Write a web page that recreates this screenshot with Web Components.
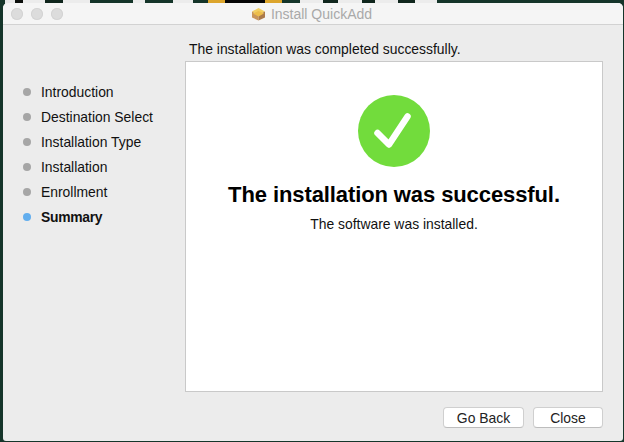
<!DOCTYPE html>
<html>
<head>
<meta charset="utf-8">
<title>Install QuickAdd</title>
<style>
    html, body {
        margin: 0;
        height: 442px;
        overflow: hidden;
    }
    body {
        box-sizing: border-box;
        padding: 3px 1px 1px 3px;
        font-family: 'Liberation Sans', Arial, sans-serif;
        /* the desktop picture that peeks out above the window */
        background:
            linear-gradient(90deg,
                #15352a 0 5px, #e8e8e8 5px 15px, #0c0f0c 15px 23px, #ececec 23px 45px,
                #10261d 45px 63px, #ececec 63px 90px, #15352a 90px 133px, #ececec 133px 145px,
                #15352a 145px 173px, #ececec 173px 193px, #15352a 193px 208px, #dca52c 208px 225px,
                #050505 225px 265px, #dca52c 265px 282px, #15352a 282px 300px, #ececec 300px 323px,
                #10261d 323px 338px, #ececec 338px 362px, #10261d 362px 375px, #ececec 375px 398px,
                #10261d 398px 415px, #ececec 415px 437px, #15352a 437px)
            top / 100% 4px no-repeat,
            #15352a;
    }
</style>
</head>
<body>
<install-window>
    <window-titlebar slot="title">Install QuickAdd</window-titlebar>
    <step-list slot="steps">
        <step-item>Introduction</step-item>
        <step-item>Destination Select</step-item>
        <step-item>Installation Type</step-item>
        <step-item>Installation</step-item>
        <step-item>Enrollment</step-item>
        <step-item current>Summary</step-item>
    </step-list>
    <span slot="status">The installation was completed successfully.</span>
    <result-panel slot="panel">
        <span slot="headline">The installation was successful.</span>
        The software was installed.
    </result-panel>
    <mac-button slot="actions">Go Back</mac-button>
    <mac-button slot="actions" style="--btn-width: 70px">Close</mac-button>
</install-window>

<script>
    // window frame
    class InstallWindow extends HTMLElement {
        constructor() {
            super();
            this.attachShadow({ mode: 'open' });
            this.shadowRoot.innerHTML = `
                <style>
                    :host {
                        display: flex;
                        flex-direction: column;
                        height: 100%;
                        background: #ececec;
                        border-radius: 5px 5px 3px 3px;
                        overflow: hidden;
                        color: #111;
                        font-size: 13.9px;
                    }
                    .body {
                        flex: 1;
                        display: grid;
                        grid-template-columns: 182px 418px;
                        padding-top: 15px;
                    }
                    .side { padding-top: 39px; }
                    .status {
                        height: 21px;
                        line-height: 18px;
                        padding-left: 4px;
                        white-space: nowrap;
                    }
                    .actions {
                        display: flex;
                        justify-content: flex-end;
                        gap: 9px;
                        padding-top: 15px;
                    }
                    .panel { display: flex; height: 331px; }
                </style>
                <slot name="title"></slot>
                <div class="body">
                    <div class="side"><slot name="steps"></slot></div>
                    <div>
                        <div class="status"><slot name="status"></slot></div>
                        <div class="panel"><slot name="panel"></slot></div>
                        <div class="actions"><slot name="actions"></slot></div>
                    </div>
                </div>
            `;
        }
    }

    class WindowTitlebar extends HTMLElement {
        constructor() {
            super();
            this.attachShadow({ mode: 'open' });
            this.shadowRoot.innerHTML = `
                <style>
                    :host {
                        display: grid;
                        grid-template-columns: 1fr auto 1fr;
                        align-items: center;
                        box-sizing: border-box;
                        height: 22px;
                        background: #f5f5f5;
                        border-bottom: 1px solid #d2d2d2;
                        color: #a9a9a9;
                        font-size: 14px;
                    }
                    .lights { display: flex; gap: 8px; padding-left: 8px; }
                    .lights i {
                        width: 12px;
                        height: 12px;
                        border-radius: 50%;
                        background: #dcdcdc;
                        box-shadow: inset 0 0 0 1px #d4d4d4;
                    }
                    .title {
                        display: flex;
                        align-items: center;
                        gap: 5px;
                        padding-right: 3px;
                        white-space: nowrap;
                    }
                    svg { display: block; }
                </style>
                <div class="lights"><i></i><i></i><i></i></div>
                <div class="title">
                    <svg width="15" height="14" viewBox="0 0 15 14">
                        <path d="M1 4.500 7.500 1 14 4.500 7.500 8z" fill="#f2cf63"/>
                        <path d="M1 4.500 7.500 8v5.500L1 10.500z" fill="#c9955a"/>
                        <path d="M14 4.500 7.500 8v5.500l6.500-3z" fill="#ab7a4b"/>
                        <path d="M2 6.500 7.500 4l5.500 2.500-5.500 3z" fill="#edbd4a"/>
                    </svg>
                    <slot></slot>
                </div>
                <div></div>
            `;
        }
    }

    class StepList extends HTMLElement {
        constructor() {
            super();
            this.attachShadow({ mode: 'open' });
            this.shadowRoot.innerHTML = `
                <style>
                    :host {
                        display: flex;
                        flex-direction: column;
                        padding-left: 20px;
                    }
                </style>
                <slot></slot>
            `;
        }
    }

    class StepItem extends HTMLElement {
        constructor() {
            super();
            this.attachShadow({ mode: 'open' });
            this.shadowRoot.innerHTML = `
                <style>
                    :host {
                        display: flex;
                        align-items: center;
                        gap: 10px;
                        height: 25px;
                        white-space: nowrap;
                    }
                    :host([current]) { font-weight: bold; letter-spacing: -0.3px; }
                    i {
                        width: 8px;
                        height: 8px;
                        border-radius: 50%;
                        background: #a6a6a6;
                    }
                    :host([current]) i { background: #62aeee; }
                </style>
                <i></i><slot></slot>
            `;
        }
    }

    class ResultPanel extends HTMLElement {
        constructor() {
            super();
            this.attachShadow({ mode: 'open' });
            this.shadowRoot.innerHTML = `
                <style>
                    :host {
                        display: flex;
                        flex-direction: column;
                        align-items: center;
                        box-sizing: border-box;
                        width: 100%;
                        padding-top: 33px;
                        background: #fff;
                        border: 1px solid #c9c9c9;
                        text-align: center;
                        color: #111;
                    }
                    svg { display: block; }
                    .headline {
                        margin-top: 15px;
                        margin-bottom: 8px;
                        font-size: 22px;
                        line-height: 26px;
                        letter-spacing: -0.1px;
                        font-weight: bold;
                        color: #000;
                        white-space: nowrap;
                    }
                </style>
                <svg width="72" height="72" viewBox="0 0 72 72">
                    <circle cx="36" cy="36" r="36" fill="#72dc3c"/>
                    <path d="M19.500 38 31 49.500 49.500 21.500" fill="none" stroke="#fff" stroke-width="6.500" stroke-linecap="round" stroke-linejoin="round"/>
                </svg>
                <div class="headline"><slot name="headline"></slot></div>
                <div><slot></slot></div>
            `;
        }
    }

    class MacButton extends HTMLElement {
        constructor() {
            super();
            this.attachShadow({ mode: 'open' });
            this.shadowRoot.innerHTML = `
                <style>
                    :host {
                        display: flex;
                        align-items: center;
                        justify-content: center;
                        box-sizing: border-box;
                        width: var(--btn-width, 81px);
                        height: 21px;
                        background: #fff;
                        border: 1px solid #cfcfcf;
                        border-bottom-color: #bdbdbd;
                        border-radius: 4px;
                        color: #222;
                    }
                </style>
                <slot></slot>
            `;
        }
    }

    window.customElements.define('install-window', InstallWindow);
    window.customElements.define('window-titlebar', WindowTitlebar);
    window.customElements.define('step-list', StepList);
    window.customElements.define('step-item', StepItem);
    window.customElements.define('result-panel', ResultPanel);
    window.customElements.define('mac-button', MacButton);
</script>
</body>
</html>
